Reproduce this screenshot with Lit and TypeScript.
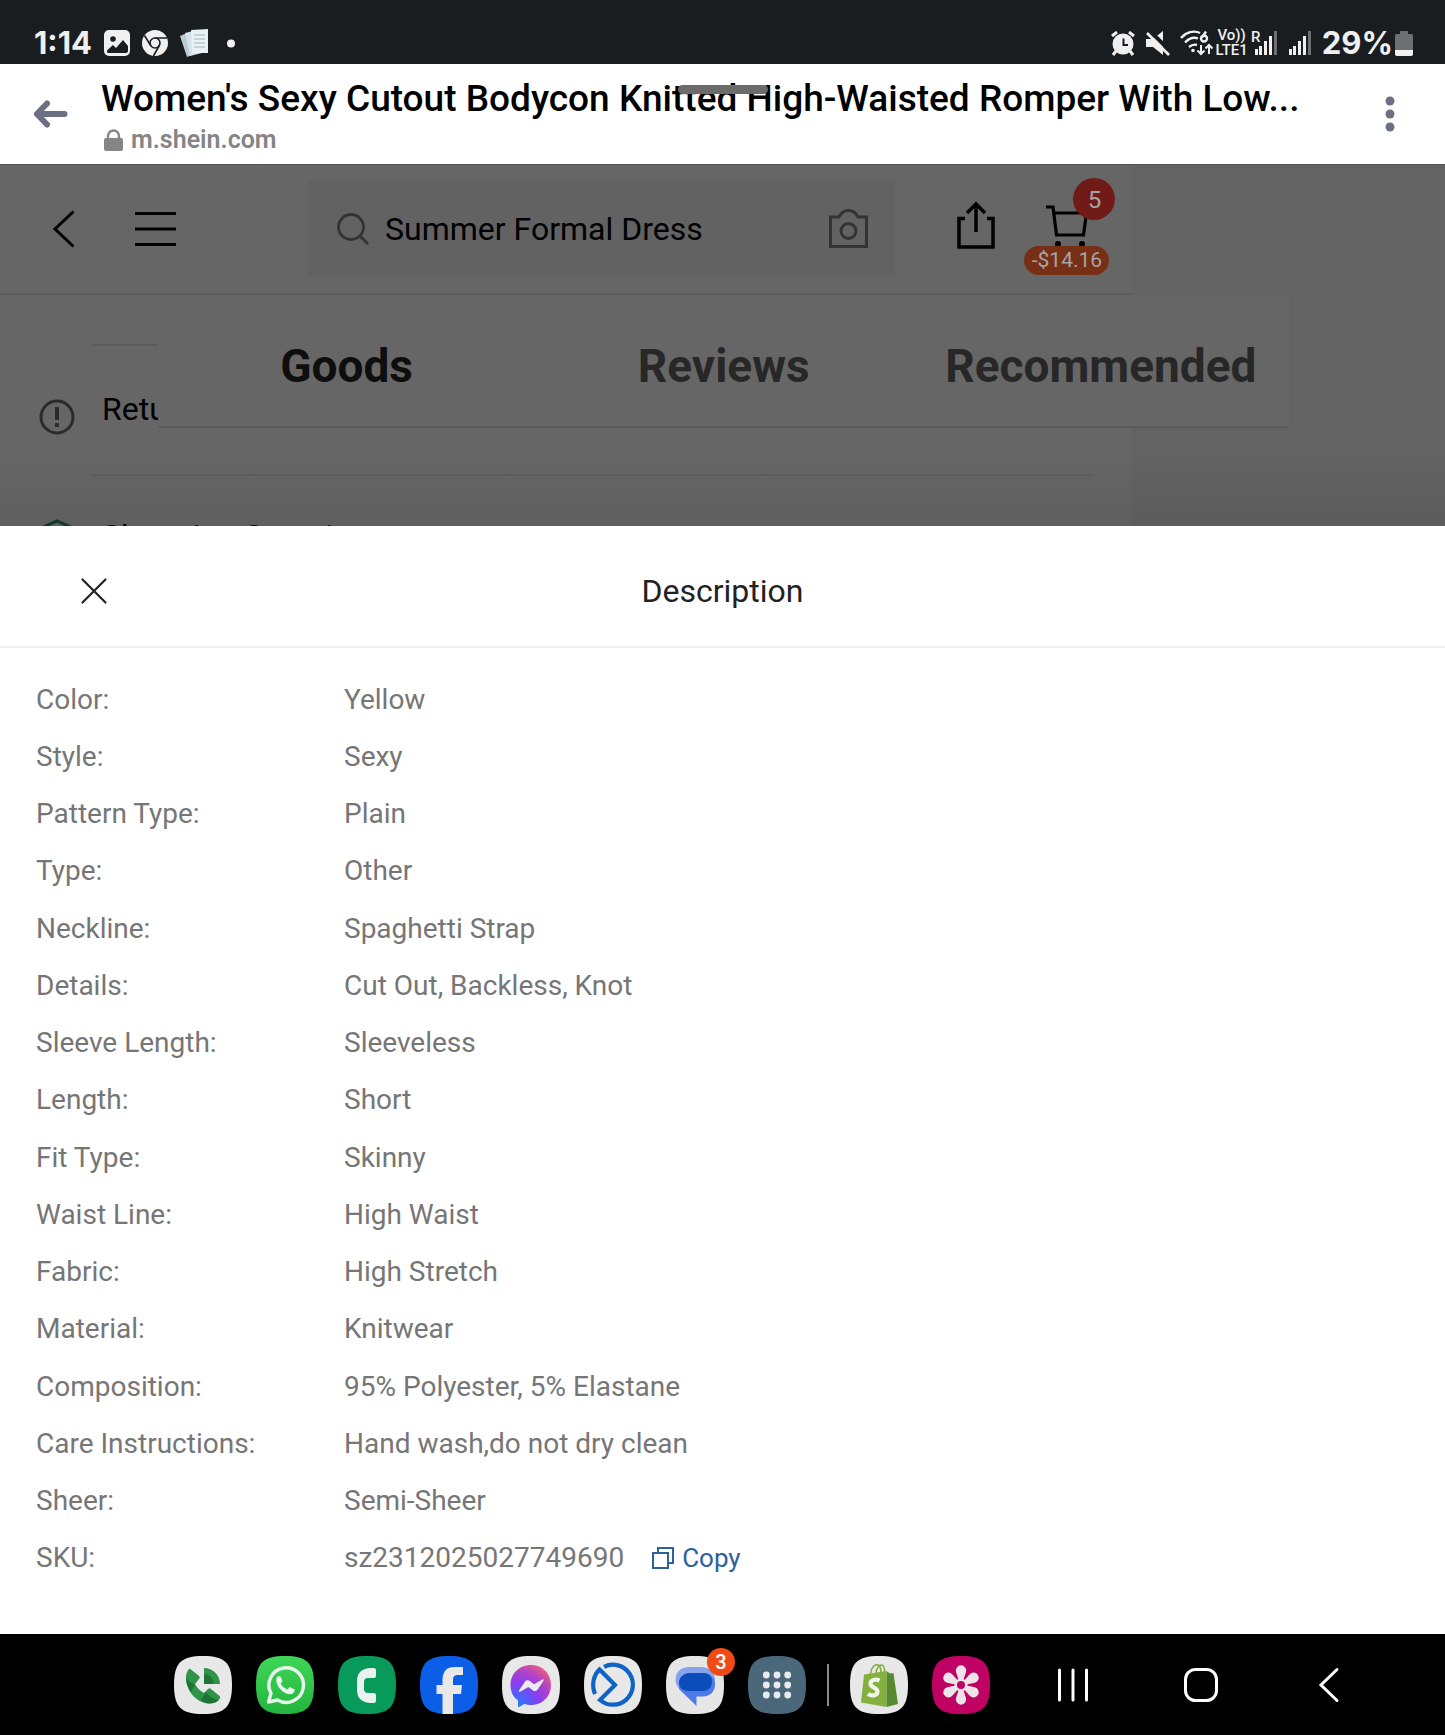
import { LitElement, html, css, svg } from "lit";
import { customElement } from "lit/decorators.js";

const specs: [string, string][] = [
  ["Color:", "Yellow"],
  ["Style:", "Sexy"],
  ["Pattern Type:", "Plain"],
  ["Type:", "Other"],
  ["Neckline:", "Spaghetti Strap"],
  ["Details:", "Cut Out, Backless, Knot"],
  ["Sleeve Length:", "Sleeveless"],
  ["Length:", "Short"],
  ["Fit Type:", "Skinny"],
  ["Waist Line:", "High Waist"],
  ["Fabric:", "High Stretch"],
  ["Material:", "Knitwear"],
  ["Composition:", "95% Polyester, 5% Elastane"],
  ["Care Instructions:", "Hand wash,do not dry clean"],
  ["Sheer:", "Semi-Sheer"],
  ["SKU:", "sz2312025027749690"],
];

const squircle = (fill: string) =>
  svg`<path fill=${fill} d="M29 0C51 0 58 7 58 29S51 58 29 58 0 51 0 29 7 0 29 0Z"/>`;

const bars = svg`<path fill="#f0f0f0" d="M1 19h3v6H1ZM5 16h3v9H5ZM10 11h3v14h-3ZM15 6h3v19h-3Z"/><path fill="#6d7072" d="M20 1h3v24h-3Z"/>`;

const apps = [
  {
    name: "Call manager",
    art: svg`${squircle("#e8e8e8")}
      <path fill="#2f9447" d="M17 13.500 25 20c1 1 1 2 0 3l-4 5c2 4 5 7 9 9l4-4c1-1 2-1 3 0l8.500 7c1 1 1 2 0 3-2.500 3-6 4.500-10.500 4.500C22 47 11.500 34 12 21c0-3 1-5 2.500-7.500 1-1 1.500-1 2.500 0Z"/>
      <path fill="#1d7434" d="M12 21c2 4 5 7 9 7l-4 8c-3-4-5-9-5-15ZM27 44l5-8c3 4 8 8 13 8-2.500 2.500-6 3.500-10 3.500-3 0-5-1.500-8-3.500Z"/>
      <path fill="#2f9447" d="M30 12c9 0 16 7 16 16H30Z"/>
      <path fill="#1d7434" d="M30 18c5 0 9 4 10 10H30Z"/>`,
  },
  {
    name: "WhatsApp",
    art: svg`${squircle("url(#wa)")}
      <defs><linearGradient id="wa" x1="0" y1="0" x2="0" y2="1"><stop stop-color="#3fd758"/><stop offset="1" stop-color="#23b43d"/></linearGradient></defs>
      <path fill="none" stroke="#e9f5ea" stroke-width="3.400" stroke-linejoin="round" d="M12.500 46 15 37.300A17.300 17.300 0 1 1 21.500 44Z"/>
      <path fill="#e9f5ea" d="M20.500 22c1-2 2-2.200 4-1.500l2 4.500-1.800 2.800c1.600 2.700 4 4.700 6.800 5.700l2.200-2.500 5 2.500c0 3-2.500 5-5.500 4.700C26 37 19 29 20.500 22Z"/>`,
  },
  {
    name: "Phone",
    art: svg`${squircle("#079a5a")}
      <path fill="#e9f2ee" d="M33 12h3c1 0 2 1 2 2v6c0 1-1 2-2 2h-6c-2.500 0-4 1.500-4 4v7c0 2.500 1.500 4 4 4h6c1 0 2 1 2 2v6c0 1-1 2-2 2h-3c-9 0-14-5-14-13v-9c0-8 5-13 14-13Z"/>`,
  },
  {
    name: "Facebook",
    art: svg`${squircle("#0b5fe6")}
      <path fill="#e8e8e8" d="M22.500 58V38H16.500v-9h6v-5c0-8.500 4-13 12-13h8.500v8h-5c-3.500 0-5 1.500-5 5v5h9l-1 9h-8v20Z"/>`,
  },
  {
    name: "Messenger",
    art: svg`${squircle("#e8e8e8")}
      <defs><radialGradient id="ms" cx="0.15" cy="1" r="1.15"><stop stop-color="#1683fb"/><stop offset=".5" stop-color="#8a3cf2"/><stop offset=".75" stop-color="#b043c8"/><stop offset="1" stop-color="#f2607a"/></radialGradient></defs>
      <path fill="url(#ms)" d="M29 9C40.500 9 49 17.500 49 29S40.500 49 29 49c-2.500 0-5-.5-7-1l-4 2.500c-1.500 1-2 .5-2-1V44.500C11 41 8.500 35.500 8.500 29 8.500 17.500 17.500 9 29 9Z"/>
      <path fill="#ececec" d="m17 34.500 6-9c1-1.500 3-1.800 4.500-.7l4.500 3.500 8.500-4.800c1-.5 1.500.2 1 1.200l-6 9c-1 1.500-3 1.800-4.500.7l-4.500-3.500-8.500 4.800c-1 .5-1.500-.2-1-1.200Z"/>`,
  },
  {
    name: "Business suite",
    art: svg`${squircle("#e8e8e8")}
      <g fill="none" stroke="#0f63c5" stroke-width="4.200"><path d="M20 10.800A20 20 0 1 1 16 44L31 29 15.500 13.500C10 18.500 7 28 11 38"/></g>`,
  },
  {
    name: "Messages",
    badge: "3",
    art: svg`${squircle("#e6e6e6")}
      <path fill="#86a4ee" d="M23 11h12c8 0 14 5 14 12.500S44 36 37 36H23C15 36 9.500 31 9.500 23.500S15 11 23 11Z"/>
      <path fill="#4c7be8" d="M24 17h13c7 0 12 4.500 12 11.500S44 40.500 37 40.500h-6.500V50L13 33c0-9 4-16 11-16Z"/>
      <path fill="#0a4dbb" d="M24 17h13c6 0 9 3.500 9 8.500S43 35 37 35H23c-6 0-10-3-10-8.500S18 17 24 17Z"/>`,
  },
  {
    name: "All apps",
    art: svg`${squircle("#4b687b")}
      <g fill="#e8ecee">${[19, 29, 39].map((y) =>
        [18.3, 29, 39.7].map((x) => svg`<circle cx=${x} cy=${y} r="3.400"/>`)
      )}</g>`,
  },
  {
    name: "Shopify",
    art: svg`${squircle("#e8e8e8")}
      <path fill="none" stroke="#7fae3c" stroke-width="1.500" d="M20.500 18C21 11 25 8 28 9c2.500 1 3 4 3 8M26 17c.5-5 3-8 5.500-8 2 0 3 3 3.200 7"/>
      <path fill="#84b13e" d="M14 18.500 36.500 15v36L11 46.500Z"/>
      <path fill="#588b30" d="m36.500 15 3 2.200h4L48 48l-11.500 3Z"/>
      <path fill="none" stroke="#f1f5ea" stroke-width="4.200" d="M29.500 24.500c-4-2-9-.5-9 3.300 0 4 7 3.700 7 7.700 0 4-5.500 5-9.500 2.500"/>`,
  },
  {
    name: "Gallery",
    art: svg`${squircle("#c00264")}
      <g fill="#ece4e8">${[0, 60, 120, 180, 240, 300].map(
        (a) => svg`<path transform="rotate(${a} 29 29)" d="M27 25 24 16a5.200 5.200 0 1 1 10 0l-3 9Z"/>`
      )}<circle cx="29" cy="29" r="6.500"/></g><circle cx="29" cy="29" r="4" fill="#c00264"/>`,
  },
];

@customElement("app-root")
export class AppRoot extends LitElement {
  static styles = css`
    :host {
      display: flex;
      flex-direction: column;
      min-height: 100vh;
      font-family: Roboto, "Liberation Sans", sans-serif;
      background: #fff;
    }
    * { box-sizing: border-box; }
    svg { display: block; flex: none; }
    button {
      display: flex;
      padding: 0;
      border: 0;
      background: none;
      color: inherit;
      font: inherit;
    }
    a { color: inherit; text-decoration: none; }

    .status {
      display: flex;
      justify-content: space-between;
      height: 64px;
      padding: 23px 32px 0 34px;
      background: #191d20;
      color: #f0f0f0;
      font: 700 31px/40px Inter, sans-serif;
    }
    .status-side { display: flex; align-items: center; gap: 12px; height: 40px; }
    .status-side.right { gap: 10px; }
    .network { display: flex; align-items: center; gap: 2px; }
    .volte { font: 500 15px/15px Roboto, sans-serif; text-align: center; }

    .browser {
      position: relative;
      display: flex;
      align-items: center;
      height: 100px;
      padding: 0 48px 0 33px;
      background: #fff;
    }
    .heading { flex: 1; min-width: 0; margin-left: 33px; padding-top: 8px; }
    .page-title {
      margin: 0;
      overflow: hidden;
      white-space: nowrap;
      text-overflow: ellipsis;
      font-weight: 500;
      font-size: 37px;
      line-height: 44px;
      color: #000;
    }
    .site {
      display: flex;
      align-items: center;
      gap: 8px;
      padding-left: 3px;
      color: #858585;
      font-weight: 600;
      font-size: 25px;
      line-height: 38px;
    }
    .grip {
      position: absolute;
      top: 21px;
      left: 50%;
      width: 90px;
      height: 9px;
      margin-left: -45px;
      border-radius: 5px;
      background: #6b6b6b;
    }

    .backdrop {
      position: relative;
      height: 362px;
      overflow: hidden;
      border-top: 1px solid #555;
      background: linear-gradient(#636363 80%, #5c5c5c);
      color: #000;
      font-size: 32px;
    }
    .shop { width: 78.300%; height: 100%; background: linear-gradient(#666 80%, #5f5f5f); }
    .toolbar {
      display: flex;
      align-items: center;
      height: 130px;
      padding: 0 22px 0 52px;
      border-bottom: 2px solid #5c5c5c;
    }
    .menu { margin-left: 59px; }
    .search {
      display: flex;
      align-items: center;
      flex: 1;
      min-width: 0;
      height: 96px;
      margin: 0 62px 0 132px;
      padding: 0 27px 0 29px;
      background: #626262;
    }
    .query {
      flex: 1;
      min-width: 0;
      margin-left: 16px;
      padding: 0;
      border: 0;
      outline: 0;
      background: none;
      color: #000;
      font: 32px/40px Roboto, sans-serif;
    }
    .cart { position: relative; width: 85px; height: 96px; margin-left: 29px; padding: 24px 0 0 22px; }
    .count {
      position: absolute;
      top: -3px;
      right: -6px;
      width: 42px;
      height: 42px;
      border-radius: 50%;
      background: #701b17;
      color: #a5a5a5;
      font-size: 24px;
      line-height: 44px;
      text-align: center;
    }
    .saving {
      position: absolute;
      left: 0;
      bottom: 2px;
      width: 85px;
      border-radius: 15px;
      background: #773016;
      color: #a5a5a5;
      font-size: 21px;
      line-height: 29px;
      text-align: center;
    }
    .notes { margin: 49px 37px 0 91px; }
    .note {
      position: relative;
      height: 130px;
      padding: 44px 11px 0;
      border-top: 2px solid #5c5c5c;
      line-height: 38px;
    }
    .note-icon { position: absolute; left: -52px; top: 53px; }
    .note.secure { padding-top: 41px; }
    .note.secure .note-icon { top: 43px; }
    .tabs {
      position: absolute;
      top: 130px;
      left: 158px;
      display: flex;
      width: 78.300%;
      height: 133px;
      border-bottom: 2px solid #5c5c5c;
      background: #666;
    }
    .tab {
      flex: 1;
      align-items: center;
      justify-content: center;
      color: #272727;
      font-weight: 700;
      font-size: 46px;
      line-height: 56px;
      padding-top: 11px;
    }
    .tab.active { color: #0e0e0e; }

    .sheet { display: flex; flex: 1; flex-direction: column; background: #fff; }
    .sheet-head {
      display: grid;
      grid-template-columns: 1fr auto 1fr;
      align-items: center;
      height: 122px;
      padding: 10px 80px 0;
      border-bottom: 2px solid #f0f0f0;
      color: #222;
    }
    .sheet-title { margin: 0; font-weight: 400; font-size: 32px; line-height: 40px; }
    .specs {
      display: grid;
      flex: 1;
      grid-auto-rows: 1fr;
      margin: 0;
      padding: 23px 36px 47px;
      color: #767676;
      font-size: 28px;
      line-height: 36px;
    }
    .spec { display: grid; grid-template-columns: 308px 1fr; align-items: center; }
    .value { display: flex; align-items: center; gap: 28px; margin: 0; }
    .copy { align-items: center; gap: 8px; color: #2d609c; font-size: 26px; }

    .taskbar {
      display: flex;
      align-items: center;
      justify-content: space-between;
      height: 101px;
      padding: 0 100px 0 174px;
      background: #000;
    }
    .dock { display: flex; align-items: center; gap: 24px; }
    .app { position: relative; }
    .badge {
      position: absolute;
      top: -8px;
      right: -11px;
      width: 28px;
      height: 28px;
      border-radius: 50%;
      background: #f04a16;
      color: #fff;
      font: 500 20px/28px Roboto, sans-serif;
      text-align: center;
    }
    .divider { width: 2px; height: 42px; margin: 0 -3px; background: #8a8a8a; }
    .keys { display: flex; align-items: center; gap: 95px; }
  `;

  private statusBar() {
    return html`<header class="status">
      <div class="status-side">
        <span>1:14</span>
        <svg width="26" height="26" viewBox="0 0 26 26">
          <rect width="26" height="26" rx="5" fill="#f0f0f0" />
          <path fill="#191d20" d="M3 20.500 9 15l3 3 7-8 5 6v5c0 1-1 2-2 2H4c-1 0-1-1-1-2.500Z" />
          <circle cx="9" cy="9" r="2.800" fill="#191d20" />
        </svg>
        <svg width="26" height="26" viewBox="0 0 26 26">
          <circle cx="13" cy="13" r="13" fill="#f0f0f0" />
          <g fill="none" stroke="#191d20" stroke-width="1.600">
            <circle cx="13" cy="13" r="5" />
            <path d="M13 8h12M8.700 15.500 2.500 5.500M17.300 15.500 11.500 26" />
          </g>
        </svg>
        <svg width="29" height="28" viewBox="0 0 29 28">
          <path fill="#b9cdd4" d="m0 7 7-3 8 21-8 3Z" />
          <path fill="#d5e2e6" d="m5 4 8-2 9 22-12 3Z" />
          <path fill="#e8f1f4" d="M11 1 28 0v24H12Z" />
          <path stroke="#9bb3bd" d="M14 6h11M14 10h11M14 14h11M14 18h11" />
        </svg>
        <svg width="20" height="9" viewBox="0 0 20 9"><circle cx="10" cy="4.500" r="4" fill="#f0f0f0" /></svg>
      </div>
      <div class="status-side right">
        <svg width="24" height="25" viewBox="0 0 24 25">
          <circle cx="12" cy="13" r="10.500" fill="#f0f0f0" />
          <path fill="none" stroke="#f0f0f0" stroke-width="3" d="m1 5 5-4M18 1l5 4M5 20l-3 4M19 20l3 4" />
          <path fill="none" stroke="#191d20" stroke-width="2" d="M12.500 7.500V14H17" />
        </svg>
        <svg width="25" height="25" viewBox="0 0 25 25">
          <path fill="#f0f0f0" d="M1 8h7l10-8v24l-10-8H1Z" />
          <path stroke="#191d20" stroke-width="4" d="M4-1 26 21" />
          <path stroke="#f0f0f0" stroke-width="2.600" d="m2 2 22 22" />
        </svg>
        <div class="network">
          <svg width="33" height="26" viewBox="0 0 33 26">
            <g fill="none" stroke="#f0f0f0" stroke-width="2.400">
              <path d="M1 8C6 2 14 0 20 3M5 12.500c4-4 9-5.500 13-4M9 17c3-2.500 5-3 8-2" />
              <circle cx="24" cy="8.500" r="3" /><path d="M22 7.500 26 1.500" />
              <path stroke-width="2" d="M21 15v9M17.500 20.500 21 24l3.500-3.500M29 24v-9M25.500 18.500 29 15l3.500 3.500" />
            </g>
            <circle cx="13" cy="20.500" r="1.800" fill="#f0f0f0" />
          </svg>
          <div class="volte">Vo))<br />LTE1</div>
          <svg width="28" height="34" viewBox="-4 -4 28 34">
            ${bars}
            <text x="-3" y="12" fill="#f0f0f0" stroke="#191d20" stroke-width="2" paint-order="stroke" font-family="Roboto" font-weight="500" font-size="15">R</text>
          </svg>
        </div>
        <svg width="24" height="26" viewBox="0 0 24 26">${bars}</svg>
        <div class="network">
          <span>29%</span>
          <svg width="18" height="25" viewBox="0 0 18 25">
            <path fill="#6d7072" d="M5 0h8v3h3q2 0 2 2v18q0 2-2 2H2q-2 0-2-2V5q0-2 2-2h3Z" />
            <path fill="#f0f0f0" d="M0 19h18v4q0 2-2 2H2q-2 0-2-2Z" />
          </svg>
        </div>
      </div>
    </header>`;
  }

  private browserBar() {
    return html`<div class="browser">
      <button aria-label="Back">
        <svg width="35" height="28" viewBox="0 0 35 28" fill="none" stroke="#6b7182" stroke-width="6" stroke-linecap="round" stroke-linejoin="round">
          <path d="M14 3.500 4 14l10 10.500M5 14h26.500" />
        </svg>
      </button>
      <div class="heading">
        <h1 class="page-title">Women's Sexy Cutout Bodycon Knitted High-Waisted Romper With Low...</h1>
        <div class="site">
          <svg width="19" height="22" viewBox="0 0 19 22">
            <rect y="9" width="19" height="13" rx="2" fill="#858585" />
            <path fill="none" stroke="#858585" stroke-width="2.400" d="M4 10V7a5.500 5.500 0 0 1 11 0v3" />
          </svg>
          <a href="#site">m.shein.com</a>
        </div>
      </div>
      <button aria-label="More options">
        <svg width="14" height="36" viewBox="0 0 14 36" fill="#6b7182">
          <circle cx="7" cy="5" r="4.500" /><circle cx="7" cy="18" r="4.500" /><circle cx="7" cy="31" r="4.500" />
        </svg>
      </button>
      <div class="grip"></div>
    </div>`;
  }

  private shopPage() {
    return html`<section class="backdrop">
      <div class="shop">
        <div class="toolbar">
          <button aria-label="Previous page">
            <svg width="24" height="38" viewBox="0 0 24 38" fill="none" stroke="#000" stroke-width="3"><path d="M21.500 1.500 3 19l18.500 17.500" /></svg>
          </button>
          <button class="menu" aria-label="Menu">
            <svg width="41" height="36" viewBox="0 0 41 36" fill="none" stroke="#000" stroke-width="3"><path d="M0 2.500h41M0 18h41M0 33.500h41" /></svg>
          </button>
          <div class="search">
            <svg width="32" height="32" viewBox="0 0 32 32" fill="none" stroke="#333" stroke-width="2.800"><circle cx="14" cy="14" r="12.500" /><path d="m23 23 8 8" /></svg>
            <input class="query" type="text" aria-label="Search" value="Summer Formal Dress" />
            <button aria-label="Search by image">
              <svg width="39" height="41" viewBox="0 0 39 41" fill="none" stroke="#333" stroke-width="3">
                <path d="M1.500 8h8.500c2-4 5-6.500 9.500-6.500S27 4 29 8h8.500v29.500h-36Z" /><circle cx="19.500" cy="22" r="7.500" />
              </svg>
            </button>
          </div>
          <button aria-label="Share">
            <svg width="38" height="56" viewBox="0 0 38 56" fill="none" stroke="#000" stroke-width="3.500">
              <path d="M8 17.500H2v28.500h34V17.500H30M19 31V3M10 12l9-9 9 9" />
            </svg>
          </button>
          <button class="cart" aria-label="Cart">
            <svg width="42" height="46" viewBox="0 0 42 46" fill="none" stroke="#000" stroke-width="3.200">
              <path d="M0 2h7l3.500 28h27l3-22H8" /><circle cx="12" cy="39" r="3" fill="#000" stroke="none" /><circle cx="36" cy="39" r="3" fill="#000" stroke="none" />
            </svg>
            <span class="count">5</span>
            <span class="saving">-$14.16</span>
          </button>
        </div>
        <div class="notes">
          <div class="note">
            <svg class="note-icon" width="36" height="36" viewBox="0 0 36 36" fill="none" stroke="#2b2b2b" stroke-width="3">
              <circle cx="18" cy="18" r="16" /><path stroke-width="4" d="M18 8v13M18 24v4" />
            </svg>
            Return
          </div>
          <div class="note secure">
            <svg class="note-icon" width="36" height="40" viewBox="0 0 36 40" fill="none" stroke="#12392c" stroke-width="3">
              <path d="M2 9 18 2l16 7v20L18 38 2 29Z" />
            </svg>
            Shopping Security
          </div>
        </div>
      </div>
      <nav class="tabs">
        <button class="tab active">Goods</button>
        <button class="tab">Reviews</button>
        <button class="tab">Recommended</button>
      </nav>
    </section>`;
  }

  private sheet() {
    return html`<main class="sheet">
      <div class="sheet-head">
        <button aria-label="Close">
          <svg width="28" height="28" viewBox="0 0 28 28" fill="none" stroke="#222" stroke-width="2.200" stroke-linecap="round"><path d="m2.500 2.500 23 23M25.500 2.500l-23 23" /></svg>
        </button>
        <h2 class="sheet-title">Description</h2>
      </div>
      <dl class="specs">
        ${specs.map(
          ([label, value]) => html`<div class="spec">
            <dt>${label}</dt>
            <dd class="value">
              <span>${value}</span>
              ${label === "SKU:"
                ? html`<button class="copy">
                    <svg width="22" height="22" viewBox="0 0 22 22" fill="none" stroke="#2d609c" stroke-width="2"><path d="M1 6h15v15H1ZM6 6V1h15v15h-5" /></svg>
                    Copy
                  </button>`
                : ""}
            </dd>
          </div>`
        )}
      </dl>
    </main>`;
  }

  private taskbar() {
    return html`<footer class="taskbar">
      <div class="dock">
        ${apps.map(
          (app, i) => html`${i === 8 ? html`<span class="divider"></span>` : ""}
            <button class="app" aria-label=${app.name}>
              <svg width="58" height="58" viewBox="0 0 58 58">${app.art}</svg>
              ${app.badge ? html`<span class="badge">${app.badge}</span>` : ""}
            </button>`
        )}
      </div>
      <div class="keys">
        <button aria-label="Recent apps">
          <svg width="32" height="34" viewBox="0 0 32 34" stroke="#fff" stroke-width="3" stroke-linecap="round"><path d="M2.500 2v30M16 2v30M29.500 2v30" /></svg>
        </button>
        <button aria-label="Home">
          <svg width="34" height="34" viewBox="0 0 34 34" fill="none" stroke="#fff" stroke-width="3"><rect x="1.500" y="1.500" width="31" height="31" rx="10" /></svg>
        </button>
        <button aria-label="Back">
          <svg width="32" height="36" viewBox="-5 0 32 36" fill="none" stroke="#fff" stroke-width="3" stroke-linecap="round"><path d="M19 2.500 3 18l16 15.500" /></svg>
        </button>
      </div>
    </footer>`;
  }

  render() {
    return html`${this.statusBar()}${this.browserBar()}${this.shopPage()}${this.sheet()}${this.taskbar()}`;
  }
}
